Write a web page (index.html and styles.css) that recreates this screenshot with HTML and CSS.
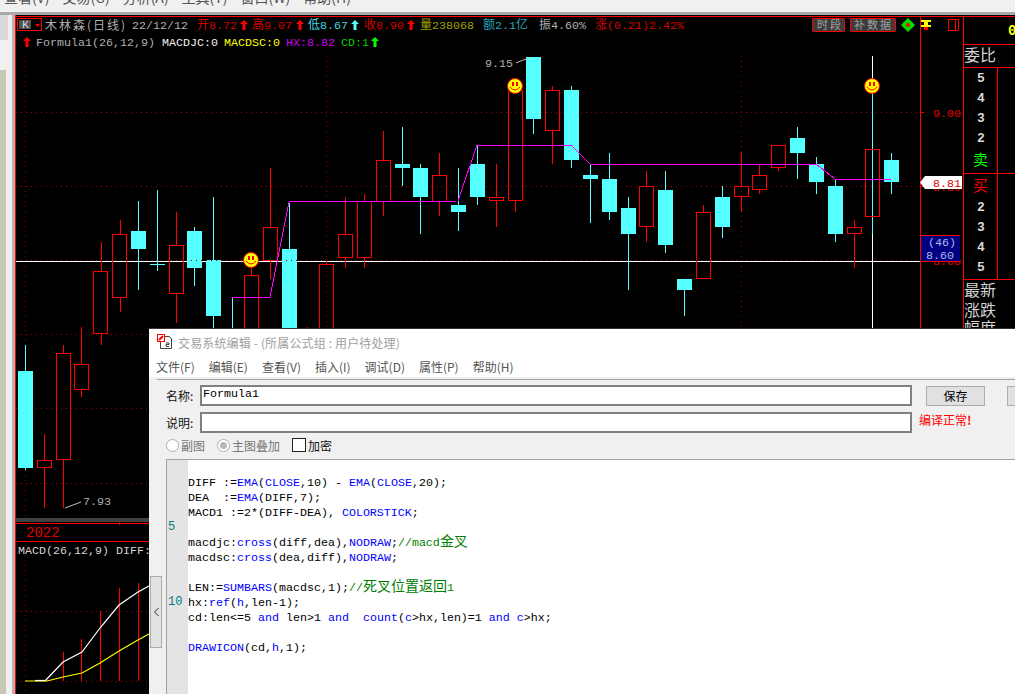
FILE: index.html
```html
<!DOCTYPE html>
<html lang="zh-CN">
<head>
  <meta charset="UTF-8" />
  <title>交易系统编辑</title>
  <link rel="stylesheet" href="styles.css">
</head>
<body>
<div class="desktop">

  <!-- Main menu, cut off by the window top -->
  <div class="topmenu">
    <span>查看(V)</span><span>交易(G)</span><span>分析(A)</span><span>工具(T)</span><span>窗口(W)</span><span>帮助(H)</span>
  </div>

  <div class="workspace">
    <div class="side">
      <div class="side-tab"></div>
      <div class="side-fill"></div>
    </div>

    <!-- Chart: viewBox uses window pixels -->
    <svg class="chart" viewBox="15 15 1000 679" width="1000" height="679">
      <defs>
        <path id="arrow" d="M0 -5L4 -1H1.5V5H-1.5V-1H-4Z"/>
        <g id="smile">
          <circle r="7.5" fill="#ffff00" stroke="#ff0000"/>
          <rect x="-3" y="-4" width="2" height="4" fill="#ff0000"/>
          <rect x="1" y="-4" width="2" height="4" fill="#ff0000"/>
          <path d="M-5 1Q0 7 5 1" fill="none" stroke="#ff0000"/>
        </g>
      </defs>

      <rect x="15" y="15" width="1000" height="679" fill="#000"/>

      <!-- grid -->
      <path class="grid" d="M16 112.5H920M16 186.5H920M16 334.5H149M16 408.5H149M16 483.5H149M16 611.5H149M16 681.5H149"/>
      <path class="grid" d="M25.5 56V328M25.5 330V518M25.5 545V694M326.5 56V328M741.5 56V328"/>
      <path class="white" d="M16 261.5H920"/>

      <g class="candles">
        <!-- lower left, below the dialog top -->
        <path class="cw" d="M25.5 345V470"/><rect class="cb" x="18" y="371" width="15" height="97"/>
        <path class="rw" d="M44.5 434V460M44.5 467V508"/><rect class="rb" x="37.5" y="460.5" width="14" height="7"/>
        <path class="rw" d="M63.5 345V353M63.5 459V508"/><rect class="rb" x="56.5" y="353.5" width="14" height="106"/>
        <path class="rw" d="M81.5 327V364M81.5 389V397"/><rect class="rb" x="74.5" y="364.5" width="14" height="25"/>
        <path class="rw" d="M101.5 242V271M101.5 333V345"/><rect class="rb" x="93.5" y="271.5" width="14" height="62"/>
        <path class="rw" d="M120.5 220V234M120.5 297V312"/><rect class="rb" x="112.5" y="234.5" width="14" height="63"/>
        <path class="cw" d="M138.5 201V290"/><rect class="cb" x="131" y="231" width="15" height="18"/>
        <path class="cw" d="M157.5 190V271M150 264.5H165"/>
        <path class="rw" d="M176.5 212V245M176.5 293V323"/><rect class="rb" x="169.5" y="245.5" width="14" height="48"/>
        <path class="cw" d="M194.5 227V286"/><rect class="cb" x="187" y="231" width="15" height="37"/>
        <path class="cw" d="M213.5 197V330"/><rect class="cb" x="206" y="260" width="15" height="56"/>
        <path class="cw" d="M232.5 297V330"/>
        <path class="rw" d="M251.5 268V275"/><rect class="rb" x="244.5" y="275.5" width="14" height="60"/>
        <path class="rw" d="M270.5 168V227M270.5 260V279"/><rect class="rb" x="263.5" y="227.5" width="14" height="33"/>
        <path class="cw" d="M289.5 203V249"/><rect class="cb" x="282" y="249" width="15" height="85"/>
        <path class="rw" d="M307.5 327V330"/>
        <path class="rw" d="M326.5 261V264"/><rect class="rb" x="319.5" y="264.5" width="14" height="70"/>
        <path class="rw" d="M345.5 197V234M345.5 257V268"/><rect class="rb" x="338.5" y="234.5" width="14" height="23"/>
        <path class="rw" d="M364.5 194V201M364.5 257V268"/><rect class="rb" x="357.5" y="201.5" width="14" height="56"/>
        <path class="rw" d="M383.5 131V160M383.5 201V216"/><rect class="rb" x="376.5" y="160.5" width="14" height="41"/>
        <path class="cw" d="M402.5 127V186"/><rect class="cb" x="395" y="164" width="15" height="4"/>
        <path class="cw" d="M420.5 164V234"/><rect class="cb" x="413" y="168" width="15" height="29"/>
        <path class="rw" d="M439.5 153V175M439.5 201V216"/><rect class="rb" x="432.5" y="175.5" width="14" height="26"/>
        <path class="cw" d="M458.5 168V231"/><rect class="cb" x="451" y="205" width="15" height="7"/>
        <path class="cw" d="M477.5 145V205"/><rect class="cb" x="470" y="164" width="15" height="33"/>
        <path class="rw" d="M496.5 164V197M496.5 201V227"/><rect class="rb" x="489.5" y="197.5" width="14" height="3"/>
        <path class="rw" d="M515.5 201V212"/><rect class="rb" x="508.5" y="90.5" width="14" height="110"/>
        <path class="cw" d="M533.5 57V134"/><rect class="cb" x="526" y="57" width="15" height="62"/>
        <path class="rw" d="M552.5 86V90M552.5 130V164"/><rect class="rb" x="545.5" y="90.5" width="14" height="40"/>
        <path class="cw" d="M571.5 86V168"/><rect class="cb" x="564" y="90" width="15" height="70"/>
        <path class="cw" d="M590.5 164V223"/><rect class="cb" x="583" y="175" width="15" height="4"/>
        <path class="cw" d="M609.5 153V220"/><rect class="cb" x="602" y="179" width="15" height="33"/>
        <path class="cw" d="M628.5 197V290"/><rect class="cb" x="621" y="208" width="15" height="26"/>
        <path class="rw" d="M646.5 171V186M646.5 227V242"/><rect class="rb" x="639.5" y="186.5" width="14" height="40"/>
        <path class="cw" d="M665.5 171V253"/><rect class="cb" x="658" y="190" width="15" height="55"/>
        <path class="cw" d="M684.5 279V316"/><rect class="cb" x="677" y="279" width="15" height="11"/>
        <path class="rw" d="M703.5 205V212"/><rect class="rb" x="696.5" y="212.5" width="14" height="66"/>
        <path class="cw" d="M722.5 186V238"/><rect class="cb" x="715" y="197" width="15" height="30"/>
        <path class="rw" d="M741.5 152V186M741.5 197V212"/><rect class="rb" x="734.5" y="186.5" width="14" height="10"/>
        <path class="rw" d="M759.5 164V175M759.5 190V194"/><rect class="rb" x="752.5" y="175.5" width="14" height="14"/>
        <path class="rw" d="M778.5 167V171"/><rect class="rb" x="771.5" y="145.5" width="14" height="22"/>
        <path class="cw" d="M797.5 127V179"/><rect class="cb" x="790" y="138" width="15" height="15"/>
        <path class="cw" d="M816.5 157V194"/><rect class="cb" x="809" y="164" width="15" height="18"/>
        <path class="cw" d="M835.5 179V242"/><rect class="cb" x="828" y="186" width="15" height="48"/>
        <path class="rw" d="M854.5 220V227M854.5 233V268"/><rect class="rb" x="847.5" y="227.5" width="14" height="6"/>
        <path class="cw" d="M891.5 153V194"/><rect class="cb" x="884" y="160" width="15" height="22"/>
      </g>

      <path class="grid" d="M16 260.5H920"/>
      <path class="white" d="M872.5 56V328"/>
      <path class="cw crisp" d="M872.5 86V234"/>
      <rect class="rb crisp" x="865.5" y="149.5" width="14" height="67"/>
      <polyline class="magenta" points="232,297 270,297 289,202 458,201 477,145 571,145 590,164 816,164 835,179 891,179"/>

      <use href="#smile" x="251" y="260"/>
      <use href="#smile" x="515" y="86"/>
      <use href="#smile" x="872" y="86"/>

      <text class="t grey" x="485" y="67">9.15</text>
      <path class="note" d="M516 63Q522 60 530 58"/>
      <text class="t grey" x="83" y="505">7.93</text>
      <path class="note" d="M65 508L81 502"/>

      <!-- legend -->
      <rect class="kbtn" x="17.5" y="18.5" width="24" height="12"/>
      <rect x="19" y="20" width="12" height="9" fill="#505050"/>
      <text class="t lightgrey" x="22" y="28">K</text>
      <path d="M35 24H40L37.5 27Z" fill="#ff0000"/>
      <text class="t name grey" x="45" y="30">木林森(日线)</text>
      <text class="t grey" x="132" y="29">22/12/12</text>
      <text class="t red" x="197" y="29"><tspan class="zh">开</tspan>8.72</text><use href="#arrow" x="244" y="25" fill="#ff0000"/>
      <text class="t red" x="252" y="29"><tspan class="zh">高</tspan>9.07</text><use href="#arrow" x="300" y="25" fill="#ff0000"/>
      <text class="t cyan" x="308" y="29"><tspan class="zh">低</tspan>8.67</text><use href="#arrow" x="355" y="25" fill="#54ffff"/>
      <text class="t red" x="364" y="29"><tspan class="zh">收</tspan>8.90</text><use href="#arrow" x="411" y="25" fill="#ff0000"/>
      <text class="t olive" x="420" y="29"><tspan class="zh">量</tspan>238068</text>
      <text class="t teal" x="483" y="29"><tspan class="zh">额</tspan>2.1<tspan class="zh">亿</tspan></text>
      <text class="t grey" x="539" y="29"><tspan class="zh">振</tspan>4.60%</text>
      <text class="t red" x="595" y="29"><tspan class="zh">涨</tspan>(0.21)2.42%</text>

      <use href="#arrow" x="27" y="42" fill="#ff0000"/>
      <text class="t grey" x="36" y="46">Formula1(26,12,9)</text>
      <text class="t whitetext" x="162" y="46">MACDJC:0</text>
      <text class="t yellow" x="224" y="46">MACDSC:0</text>
      <text class="t magentatext" x="286" y="46">HX:8.82</text>
      <text class="t green" x="341" y="46">CD:1</text>
      <use href="#arrow" x="375" y="42" fill="#00ff00"/>

      <!-- toolbar in the chart corner -->
      <rect class="tbtn" x="812.5" y="18.5" width="32" height="13" rx="1"/>
      <text class="t btntext" x="817" y="29">时段</text>
      <rect class="tbtn" x="850.5" y="18.5" width="45" height="13" rx="1"/>
      <text class="t btntext" x="854" y="29">补数据</text>
      <path d="M908 18L915 25L908 32L901 25Z" fill="#00e000"/>
      <circle cx="908" cy="25" r="2" fill="#ff0000"/>
      <path d="M921 20H931V22H928V25H931V27H921V25H924V22H921Z" fill="#ffff00"/>
      <rect x="924" y="27" width="4" height="3" fill="#ff0000"/>
      <rect x="948.5" y="19.5" width="10" height="11" fill="none" stroke="#ff0000"/>
      <path class="line" d="M955.5 19V31"/>

      <!-- frame -->
      <path class="line" d="M15.5 15V694M15 16.5H1015M920.5 16V328M963.5 16V328M963 44.5H1015M963 67.5H1015M963 173.5H1015M963 279.5H1015M997.5 67V279"/>
      <rect x="16" y="518" width="133" height="4" fill="#404040"/>
      <path class="line" d="M16 523.5H149M16 541.5H149M119.5 522V525"/>
      <text class="t year" x="26" y="537">2022</text>
      <text class="t lightgrey" x="18" y="554">MACD(26,12,9) DIFF:</text>

      <!-- MACD -->
      <path class="line" d="M63.5 652V681M81.5 639V681M100.5 611V681M119.5 588V681M138.5 583V681"/>
      <polyline class="mwhite" points="45,681 63,662 82,652 100,628 119,605 138,592 149,586"/>
      <polyline class="myellow" points="25,681 47,681 63,677 82,673 100,663 119,651 138,640 149,634"/>
      <path class="mwhite" d="M35 680.5H45"/>

      <!-- price axis -->
      <path class="line" d="M920 112.5H924M920 186.5H924"/>
      <text class="t axis" x="933" y="117">9.00</text>
      <text class="t axis" x="933" y="191">8.80</text>
      <text class="t axis" x="933" y="265">8.60</text>
      <path d="M920 182.5L925 176H962V189H925Z" fill="#fff"/>
      <text class="t axis" x="933" y="187">8.81</text>
      <rect x="921" y="235" width="39" height="26" fill="#000080"/>
      <path class="line" d="M921 235.5H960M921 261.5H960"/>
      <text class="t blue" x="928" y="246">(46)</text>
      <text class="t blue" x="926" y="259">8.60</text>

      <!-- bid/ask panel -->
      <text class="big" x="964" y="61">委比</text>
      <text class="t num" x="977" y="82">5</text>
      <text class="t num" x="977" y="102">4</text>
      <text class="t num" x="977" y="122">3</text>
      <text class="t num" x="977" y="142">2</text>
      <text class="side-zh sell" x="973" y="165">卖</text>
      <text class="side-zh buy" x="973" y="191">买</text>
      <text class="t num" x="977" y="211">2</text>
      <text class="t num" x="977" y="231">3</text>
      <text class="t num" x="977" y="251">4</text>
      <text class="t num" x="977" y="271">5</text>
      <text class="big" x="964" y="296">最新</text>
      <text class="big" x="964" y="316">涨跌</text>
      <text class="big" x="964" y="334">幅度</text>
      <text class="t top-zero" x="1008" y="35">0</text>
    </svg>
  </div>

  <!-- Formula editor window -->
  <div class="dialog">
    <div class="dialog-title">
      <svg class="dialog-icon" viewBox="0 0 16 16" width="16" height="16">
        <path d="M5.5 2.5H12.5L14.5 5V14.5H3.5V8" fill="#fff" stroke="#444"/>
        <path d="M9 9H12V10.5H9V12.5H12" fill="none" stroke="#444"/>
        <rect x="0.5" y="0.5" width="7" height="7" fill="#fff" stroke="#ff0000"/>
        <path d="M2 6L6 2" stroke="#ff0000" stroke-width="2"/>
      </svg>
      <span>交易系统编辑 - (所属公式组 : 用户待处理)</span>
    </div>
    <div class="dialog-menu">
      <span>文件(F)</span><span>编辑(E)</span><span>查看(V)</span><span>插入(I)</span><span>调试(D)</span><span>属性(P)</span><span>帮助(H)</span>
    </div>
    <div class="dialog-rule"></div>

    <div class="form-row">
      <label class="form-label">名称:</label>
      <div class="field field-text">Formula1</div>
      <button class="btn">保存</button>
      <button class="btn btn-next"></button>
    </div>
    <div class="form-row form-row-2">
      <label class="form-label">说明:</label>
      <div class="field"></div>
      <span class="status">编译正常<b>!</b></span>
    </div>
    <div class="options">
      <span class="opt disabled"><i class="radio"></i>副图</span>
      <span class="opt disabled"><i class="radio checked"></i>主图叠加</span>
      <span class="opt"><i class="check"></i>加密</span>
    </div>

    <div class="editor">
      <div class="gutter">
        <div class="line-no"></div><div class="line-no"></div><div class="line-no"></div><div class="line-no"></div>
        <div class="line-no">5</div>
        <div class="line-no"></div><div class="line-no"></div><div class="line-no"></div><div class="line-no"></div>
        <div class="line-no">10</div>
      </div>
      <div class="code">
        <div class="ln"></div>
        <div class="ln">DIFF :=<b>EMA</b>(<b>CLOSE</b>,10) - <b>EMA</b>(<b>CLOSE</b>,20);</div>
        <div class="ln">DEA  :=<b>EMA</b>(DIFF,7);</div>
        <div class="ln">MACD1 :=2*(DIFF-DEA), <b>COLORSTICK</b>;</div>
        <div class="ln"></div>
        <div class="ln">macdjc:<b>cross</b>(diff,dea),<b>NODRAW</b>;<em>//macd<span class="zh">金叉</span></em></div>
        <div class="ln">macdsc:<b>cross</b>(dea,diff),<b>NODRAW</b>;</div>
        <div class="ln"></div>
        <div class="ln">LEN:=<b>SUMBARS</b>(macdsc,1);<em>//<span class="zh">死叉位置返回</span>1</em></div>
        <div class="ln">hx:<b>ref</b>(<b>h</b>,len-1);</div>
        <div class="ln">cd:len&lt;=5 <b>and</b> len&gt;1 <b>and</b>  <b>count</b>(<b>c</b>&gt;hx,len)=1 <b>and</b> <b>c</b>&gt;hx;</div>
        <div class="ln"></div>
        <div class="ln"><b>DRAWICON</b>(cd,<b>h</b>,1);</div>
      </div>
    </div>

    <div class="handle">
      <svg viewBox="0 0 7 10" width="7" height="10"><path d="M5.5 1L1.5 5L5.5 9" fill="none" stroke="#333"/></svg>
    </div>
  </div>

</div>
</body>
</html>
```

FILE: styles.css
```css
html, body {
  margin: 0;
  padding: 0;
  background: #f0f0f0;
}

.desktop {
  position: relative;
  width: 1015px;
  height: 694px;
  overflow: hidden;
  display: flex;
  flex-direction: column;
  font-family: "Noto Sans CJK SC", "Liberation Sans", sans-serif;
}

.topmenu {
  height: 12px;
  flex: none;
  display: flex;
  gap: 13px;
  padding-left: 4px;
  overflow: hidden;
  font-size: 14px;
  line-height: 12px;
  color: #555;
  border-bottom: 3px solid #a9a9a9;
}

.topmenu span {
  margin-top: -9px;
  white-space: nowrap;
}

.workspace {
  flex: 1;
  display: flex;
  min-height: 0;
}

.side {
  width: 12px;
  flex: none;
  display: flex;
  flex-direction: column;
  border-right: 3px solid #b4b4b4;
}

.side-tab {
  width: 8px;
  height: 25px;
  margin-bottom: 30px;
  background: #d9d9d9;
}

.side-fill {
  flex: 1;
  width: 6px;
  background: #c8c8b8;
}

.chart {
  display: block;
  flex: none;
}

/* chart lines */
.grid {
  fill: none;
  stroke: #a00000;
  stroke-dasharray: 1 4;
  shape-rendering: crispEdges;
}

.white {
  fill: none;
  stroke: #fff;
  shape-rendering: crispEdges;
}

.line {
  fill: none;
  stroke: #ff0000;
  shape-rendering: crispEdges;
}

.candles, .crisp {
  shape-rendering: crispEdges;
}

.cw {
  fill: none;
  stroke: #54ffff;
}

.cb {
  fill: #54ffff;
}

.rw {
  fill: none;
  stroke: #ff0000;
}

.rb {
  fill: none;
  stroke: #ff0000;
}

.magenta {
  fill: none;
  stroke: #ff00ff;
  shape-rendering: crispEdges;
}

.note {
  fill: none;
  stroke: #c0c0c0;
}

.mwhite {
  fill: none;
  stroke: #fff;
  stroke-width: 1.2;
}

.myellow {
  fill: none;
  stroke: #ffff00;
  stroke-width: 1.2;
}

.kbtn {
  fill: #000;
  stroke: #ff0000;
}

.tbtn {
  fill: #3c3c3c;
  stroke: #ff0000;
}

/* chart text */
.t {
  font-family: "Liberation Mono", "Noto Sans CJK SC", monospace;
  font-size: 11.67px;
  fill: #c0c0c0;
}

.t .zh {
  font-family: "Noto Sans CJK SC", sans-serif;
  font-size: 12px;
}

.name {
  font-family: "Noto Sans CJK SC", sans-serif;
  font-size: 12px;
  letter-spacing: 2px;
}

.grey { fill: #b0b0b0; }
.lightgrey { fill: #d4d4d4; }
.red { fill: #d80000; }
.cyan { fill: #40d8e0; }
.olive { fill: #a0a000; }
.teal { fill: #2ca0b8; }
.whitetext { fill: #f0f0f0; }
.yellow { fill: #ffff00; }
.magentatext { fill: #d000f0; }
.green { fill: #00d000; }

.top-zero {
  font-size: 14px;
  font-weight: bold;
  fill: #ffff00;
}

.btntext {
  font-family: "Noto Sans CJK SC", sans-serif;
  font-size: 11px;
  letter-spacing: 2px;
  fill: #a0a0a0;
}

.year {
  font-size: 14px;
  fill: #e00000;
}

.axis {
  fill: #e00000;
}

.blue { fill: #a8b8f0; }

.num {
  font-weight: bold;
  font-size: 13px;
  fill: #d8d8d8;
}

.big {
  font-family: "Noto Sans CJK SC", sans-serif;
  font-size: 16px;
  fill: #d4d4d4;
}

.side-zh {
  font-family: "Noto Sans CJK SC", sans-serif;
  font-size: 15px;
}

.sell { fill: #00ff00; }
.buy { fill: #ff0000; }

/* dialog */
.dialog {
  position: absolute;
  left: 149px;
  top: 328px;
  right: 0;
  bottom: 0;
  display: flex;
  flex-direction: column;
  background: #f0f0f0;
  border-top: 1px solid #333;
}

.dialog-title {
  height: 26px;
  flex: none;
  display: flex;
  align-items: center;
  gap: 5px;
  padding-left: 8px;
  background: #fff;
  color: #a0a0a0;
  font-size: 12px;
  letter-spacing: 0.15px;
}

.dialog-icon {
  flex: none;
}

.dialog-menu {
  height: 22px;
  flex: none;
  display: flex;
  align-items: center;
  gap: 14px;
  padding-left: 7px;
  background: #fff;
  color: #555;
  font-size: 12px;
}

.dialog-rule {
  height: 0;
  flex: none;
  margin: 2px 0 0 8px;
  border-top: 1px solid #a0a0a0;
}

.form-row {
  display: flex;
  flex: none;
  align-items: center;
  height: 21px;
  margin-top: 5px;
  padding-left: 17px;
  font-size: 12px;
  color: #111;
}

.form-row-2 {
  margin-top: 6px;
}

.form-label {
  width: 34px;
  flex: none;
}

.field {
  width: 708px;
  height: 17px;
  flex: none;
  background: #fff;
  border: 2px solid #808080;
}

.field-text {
  font-family: "Liberation Mono", monospace;
  font-size: 11.67px;
  line-height: 15px;
  text-indent: 1px;
  color: #000;
}

.btn {
  width: 59px;
  height: 20px;
  flex: none;
  margin-left: 14px;
  padding: 0;
  background: #e1e1e1;
  border: 1px solid #adadad;
  font-family: inherit;
  font-size: 12px;
  color: #000;
}

.btn-next {
  margin-left: 22px;
}

.status {
  margin-left: 7px;
  margin-top: -6px;
  color: #ff0000;
  font-size: 12px;
}

.options {
  display: flex;
  flex: none;
  align-items: center;
  height: 20px;
  margin-top: 2px;
  padding-left: 17px;
  font-size: 12px;
  color: #111;
}

.opt {
  display: flex;
  align-items: center;
  gap: 2px;
  margin-right: 12px;
}

.opt.disabled {
  color: #777;
}

.radio {
  width: 11px;
  height: 11px;
  position: relative;
  background: #fff;
  border: 1px solid #b0b0b0;
  border-radius: 50%;
}

.radio.checked::after {
  content: "";
  position: absolute;
  left: 2px;
  top: 2px;
  width: 7px;
  height: 7px;
  border-radius: 50%;
  background: #b8b8b8;
}

.check {
  width: 12px;
  height: 12px;
  background: #fff;
  border: 1px solid #222;
}

.editor {
  flex: 1;
  display: flex;
  min-height: 0;
  margin-top: 4px;
  margin-left: 17px;
  background: #fff;
  border-top: 1px solid #a0a0a0;
  border-left: 1px solid #a0a0a0;
  font-family: "Liberation Mono", "Noto Sans CJK SC", monospace;
  font-size: 11.67px;
  color: #000;
}

.gutter {
  width: 21px;
  flex: none;
  background: #e4e4e4;
  color: #008080;
  font-size: 12px;
}

.line-no {
  height: 15px;
  line-height: 15px;
  padding-left: 1px;
}

.code {
  flex: 1;
  padding-top: 1px;
}

.ln {
  height: 15px;
  line-height: 15px;
  white-space: pre;
}

.ln b {
  font-weight: normal;
  color: #0000ff;
}

.ln em {
  font-style: normal;
  color: #008000;
}

.ln .zh {
  font-family: "Noto Sans CJK SC", sans-serif;
  font-size: 14px;
  line-height: 0;
}

.handle {
  position: absolute;
  left: 1px;
  top: 247px;
  width: 10px;
  height: 70px;
  display: flex;
  align-items: center;
  justify-content: center;
  background: #e1e1e1;
  border: 1px solid #adadad;
}
```
